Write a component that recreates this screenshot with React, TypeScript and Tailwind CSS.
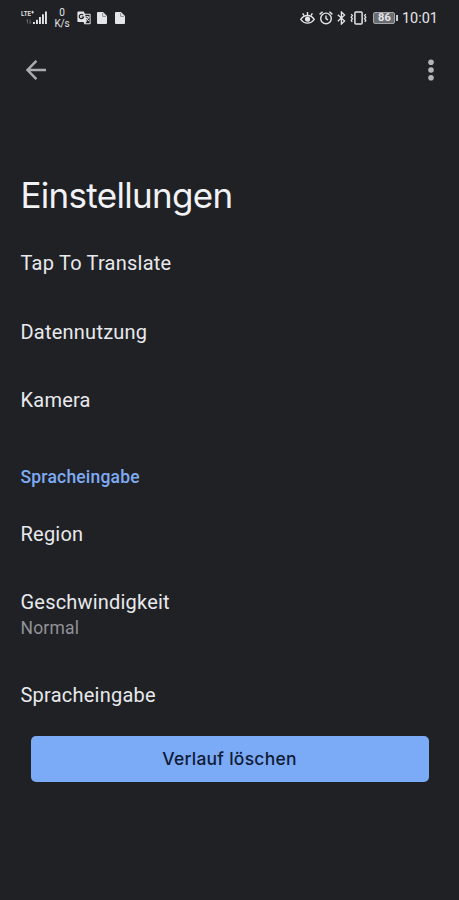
import type { ReactNode } from "react";

function StatusBar() {
  return (
    <div className="flex h-[35px] items-center justify-between px-[21px] text-[#e4e5e9]">
      <div className="flex items-center">
        {/* Signal */}
        <svg width="27" height="18" viewBox="0 0 27 18" fill="currentColor">
          <text x="0" y="7.4" fontSize="8" fontWeight="600" fontFamily="Roboto, sans-serif" textLength="10" lengthAdjust="spacingAndGlyphs">
            LTE
          </text>
          <path d="M10.2 3.2H13M11.6 1.8v2.8" stroke="currentColor" strokeWidth="0.9" />
          <path d="M6.5 10.5v4M9 10.5v4M5.5 11.7l1-1.2M10 13.3l-1 1.2" stroke="#6d6e73" strokeWidth="0.9" fill="none" />
          <rect x="12" y="13" width="1.9" height="2" />
          <rect x="15" y="10.8" width="1.9" height="4.2" />
          <rect x="18" y="8" width="1.9" height="7" />
          <rect x="21" y="5.3" width="1.9" height="9.7" />
          <rect x="24" y="2.5" width="1.9" height="12.5" />
        </svg>
        <div className="ml-[6px] flex w-4 flex-col items-center text-[10px] leading-[11px] tracking-[-0.2px]">
          <span>0</span>
          <span>K/s</span>
        </div>
        {/* Translate */}
        <svg className="ml-[7px]" width="14" height="14" viewBox="0 0 14 14">
          <path d="M1.2 .5h5.6l1 2.2h5a.8.8 0 0 1 .8.8v9a.8.8 0 0 1-.8.8H7.4L6.5 11H1.2a.8.8 0 0 1-.8-.8V1.3a.8.8 0 0 1 .8-.8Z" fill="#e4e5e9" />
          <path d="M8.2 3.7h4.4v8.6H8.2l1.5-1.5Z" fill="#202125" />
          <path d="M6.2 4.1A2.2 2.2 0 1 0 6.6 6H4.5" stroke="#202125" strokeWidth="1.2" fill="none" />
          <path d="M8.5 5.9h4M10.4 5v.9M11.8 6c-.4 1.6-1.5 2.8-2.6 3.5M9.1 7l2.7 3" stroke="#e4e5e9" strokeWidth="1" fill="none" />
        </svg>
        <FileIcon className="ml-[6px]" />
        <FileIcon className="ml-2" />
      </div>

      <div className="flex items-center">
        {/* Eye comfort */}
        <svg width="15" height="14" viewBox="0 0 15 14" fill="none" stroke="currentColor" strokeWidth="1.4">
          <path d="M.8 8.3C2.6 5.7 4.8 4.5 7.5 4.5s4.9 1.2 6.7 3.8c-1.8 2.6-4 3.8-6.7 3.8S2.6 10.9.8 8.3Z" />
          <path d="M7.5 1v3M2.6 2.4l1.5 2.3M12.4 2.4l-1.5 2.3" />
          <circle cx="7.5" cy="8.2" r="1.9" fill="currentColor" />
        </svg>
        {/* Alarm */}
        <svg className="ml-1" width="14" height="14" viewBox="0 0 14 14" fill="none" stroke="currentColor" strokeWidth="1.4">
          <circle cx="7" cy="7.4" r="5.3" />
          <path d="M7 4.4v3.2l2 1.3M.6 3.4 3.6.8M13.4 3.4l-3-2.6" />
        </svg>
        {/* Bluetooth */}
        <svg className="ml-1" width="9" height="14" viewBox="0 0 9 14" fill="none" stroke="currentColor" strokeWidth="1.3">
          <path d="M.8 3.8 7.6 10 4.4 13V1l3.2 3L.8 10.2" />
        </svg>
        {/* Vibrate */}
        <svg className="ml-1" width="17" height="14" viewBox="0 0 17 14" fill="none" stroke="currentColor" strokeWidth="1.5">
          <rect x="4.9" y="1" width="7.2" height="12" rx="1" />
          <path
            d="M1.2 3.2 2.4 4.6 1.2 6.2l1.2 1.6-1.2 1.5 1 1.5M15.8 3.2l-1.2 1.4 1.2 1.6-1.2 1.6 1.2 1.5-1 1.5"
            strokeWidth="1.3"
          />
        </svg>
        {/* Battery */}
        <div className="ml-[6px] flex h-[12px] w-[22px] items-center justify-center rounded-[2px] border border-[#a5a6aa] bg-[#6b6c70] text-[11px] font-bold leading-none">
          86
        </div>
        <div className="ml-px h-[6px] w-[1.5px] bg-[#c8c9cd]" />
        <span className="ml-1 pt-[3px] text-[14.5px] leading-none">10:01</span>
      </div>
    </div>
  );
}

function FileIcon({ className }: { className?: string }) {
  return (
    <svg className={className} width="10" height="12" viewBox="0 0 10 12">
      <path d="M1 0h5l4 4v7a1 1 0 0 1-1 1H1a1 1 0 0 1-1-1V1a1 1 0 0 1 1-1Z" fill="#e4e5e9" />
      <path d="M5.6 1v3.4H9" stroke="#85868a" strokeWidth="0.9" fill="none" />
    </svg>
  );
}

function AppBar() {
  return (
    <div className="flex h-[70px] items-center justify-between pl-[26px] pr-[25px]">
      <button aria-label="Zurück">
        <svg width="20" height="20" viewBox="0 0 20 20" fill="none" stroke="#abacb1" strokeWidth="2.4">
          <path d="M20 10H1.5M10.4.8 1.5 10l8.9 9.2" />
        </svg>
      </button>
      <button aria-label="Mehr">
        <svg width="6" height="22" viewBox="0 0 6 22" fill="#b4b5b9">
          <circle cx="3" cy="3.3" r="2.8" />
          <circle cx="3" cy="11" r="2.8" />
          <circle cx="3" cy="18.7" r="2.8" />
        </svg>
      </button>
    </div>
  );
}

function Item({ children }: { children: ReactNode }) {
  return (
    <li className="flex h-[68.5px] items-center text-[20px] leading-6 tracking-[0.23px] text-[#e8e9ed]">{children}</li>
  );
}

export default function App() {
  return (
    <div className="flex h-[900px] w-[459px] flex-col bg-[#202125] font-['Roboto',sans-serif]">
      <StatusBar />
      <AppBar />

      <main className="px-[20.5px] pt-[66px]">
        <h1 className="h-[58px] font-['Inter',sans-serif] text-[35px] leading-[48px] tracking-[-0.7px] text-[#f1f2f6]">
          Einstellungen
        </h1>

        <ul>
          <Item>Tap To Translate</Item>
          <Item>Datennutzung</Item>
          <Item>Kamera</Item>
        </ul>

        <h2 className="pt-[30px] text-[17.5px] font-medium leading-6 tracking-[0.2px] text-[#7fabf3]">
          Spracheingabe
        </h2>

        <ul className="pt-[11px]">
          <Item>Region</Item>
          <li className="flex h-[93px] flex-col justify-center text-[20px] leading-6 tracking-[0.2px] text-[#e8e9ed]">
            Geschwindigkeit
            <span className="pt-0.5 text-[17.5px] text-[#919297]">Normal</span>
          </li>
          <Item>Spracheingabe</Item>
        </ul>

        <button className="mx-[10px] mt-[6px] block h-[46px] w-[398px] rounded-[5px] bg-[#7baaf7] pt-0.5 font-['Inter',sans-serif] text-[17.5px] font-medium tracking-[0.25px] text-[#0f1c36]">
          Verlauf löschen
        </button>
      </main>
    </div>
  );
}
